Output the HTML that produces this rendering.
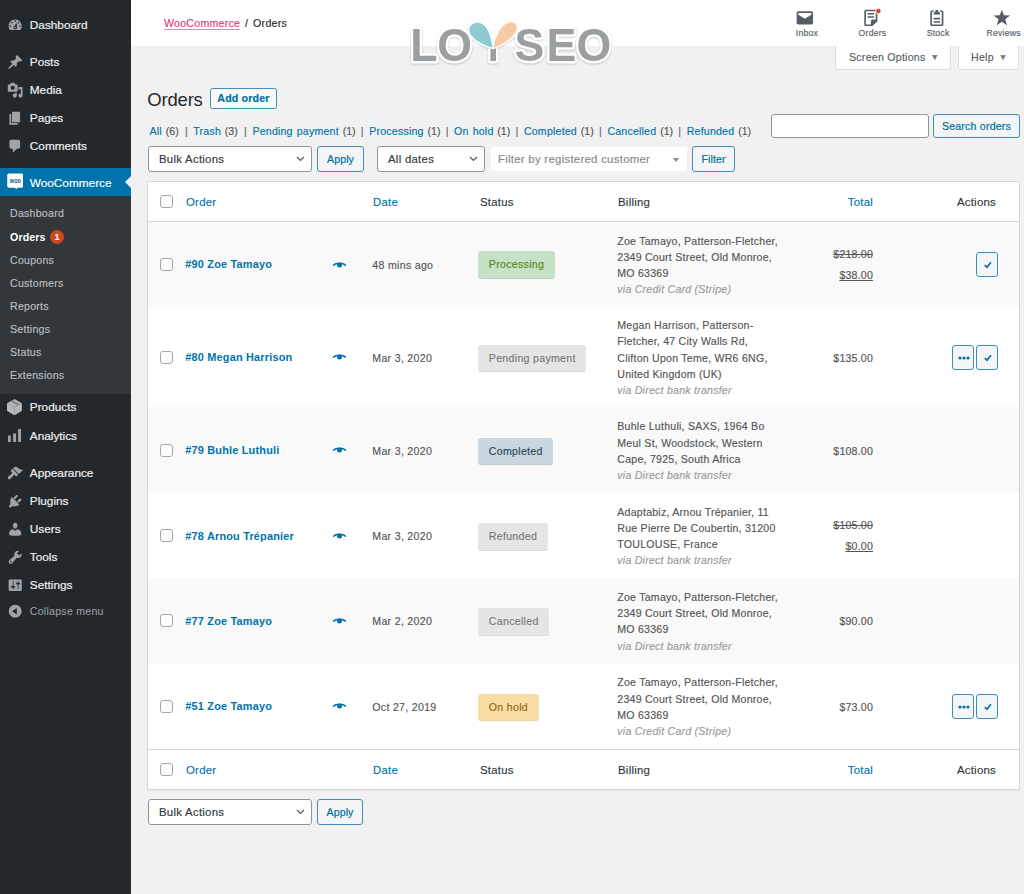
<!DOCTYPE html>
<html lang="en">
<head>
<meta charset="utf-8">
<title>Orders ‹ WooCommerce</title>
<style>
*{box-sizing:border-box;margin:0;padding:0}
html,body{width:1024px;height:894px;overflow:hidden}
body{background:#f1f1f1;font-family:"Liberation Sans",Arial,sans-serif;font-size:10.6px;color:#444;position:relative;-webkit-font-smoothing:antialiased}
a{color:#0073aa;text-decoration:none}
.abs{position:absolute}
/* ---------- sidebar ---------- */
#side{position:absolute;left:0;top:0;width:131px;height:894px;background:#23282d}
#side .mi{position:absolute;left:0;width:131px;height:28px;color:#eee;font-size:11.800px;line-height:28px;padding-left:29.800px;padding-top:.8px;white-space:nowrap;-webkit-text-stroke:.2px #eee}
#side .mi svg{position:absolute;left:6.500px;top:6.600px;width:16.400px;height:16.400px;fill:#9ea3a8}
#side .mi.cur{background:#0073aa;color:#fff}
#side .mi.cur svg{fill:#fff}
#side .mi.cur:after{content:"";position:absolute;right:0;top:8px;border:6px solid transparent;border-right-color:#f1f1f1;border-left:0}
#sub{position:absolute;left:0;top:196px;width:131px;height:197.500px;background:#32373c}
#sub .si{position:absolute;left:10px;font-size:10.6px;color:#bcc1c6;line-height:14px;white-space:nowrap;letter-spacing:.25px;-webkit-text-stroke:.12px #bcc1c6}
#sub .si.on{color:#fff;font-weight:bold;letter-spacing:.15px;-webkit-text-stroke:0}
#sub .badge{position:absolute;left:40px;top:-.3px;width:14.200px;height:14.200px;border-radius:7.100px;background:#ca4a1f;color:#fff;font-size:9.200px;line-height:14.200px;text-align:center;font-weight:bold;letter-spacing:0}
/* ---------- header ---------- */
#hdr{position:absolute;left:131px;top:0;width:893px;height:46px;background:#fff}
#crumb{position:absolute;left:33px;top:16px;font-size:10.6px;line-height:14px;color:#23282d;white-space:nowrap;letter-spacing:.25px;word-spacing:1.700px}
#crumb a{color:#d6426c;text-decoration:underline;text-decoration-color:#e58aa4;text-underline-offset:2px}
.api{position:absolute;top:7.500px;width:19.700px;height:19.700px;fill:#555d66;overflow:visible}
.apl{position:absolute;top:26.800px;width:60px;text-align:center;font-size:8.600px;letter-spacing:.25px;line-height:12px;color:#555d66;white-space:nowrap}
.tab{position:absolute;top:46px;height:23.500px;letter-spacing:.25px;background:#fff;border:1px solid #ddd;border-top:0;border-radius:0 0 3px 3px;font-size:10.6px;line-height:22px;color:#555d66;white-space:nowrap;box-shadow:0 0 0 transparent}
.tab i{font-style:normal;font-size:8.500px;margin-left:5px;position:relative;top:-1px;color:#72777c}

/* ---------- main ---------- */
h1{position:absolute;left:147.300px;top:86.500px;letter-spacing:-.2px;font-size:18.500px;font-weight:normal;color:#23282d;line-height:26px}
.btn{position:absolute;border:1px solid #418db4;-webkit-text-stroke:.2px #0071a1;letter-spacing:.1px;border-radius:3px;background:#f3f5f6;color:#0071a1;font-size:10.6px;text-align:center;white-space:nowrap}
#sss{position:absolute;left:149.500px;top:124px;font-size:10.6px;line-height:14px;color:#555;white-space:nowrap;word-spacing:.9px}
#sss a{letter-spacing:.2px}
#sss b{font-weight:normal;color:#666;margin:0 1.8px 0 2.4px}
#sss b.n{margin-left:1.4px}
.inp{position:absolute;background:#fff;border:1px solid #8f9398;border-radius:3px}
.sel{position:absolute;background:#fff;border:1px solid #8f9398;border-radius:3px;font-size:11.4px;letter-spacing:.27px;color:#32373c;padding-left:10px;white-space:nowrap}
.sel svg{position:absolute;right:6px;top:50%;margin-top:-3px;width:9px;height:6px;fill:none;stroke:#555;stroke-width:1.15}
#tbl{position:absolute;left:147px;top:181px;width:873px;height:608.500px;background:#fff;border:1px solid #d3d6d9;box-shadow:0 1px 1px rgba(0,0,0,.04)}
.row{position:absolute;left:0;width:871px}
.row.alt{background:#f9f9f9}
.cb{position:absolute;left:12px;width:13px;height:13px;border:1px solid #a3a6aa;border-radius:3px;background:#fdfdfd}
.th{position:absolute;letter-spacing:.25px;font-size:11.4px;line-height:14px;color:#32373c;white-space:nowrap}
.th.l{color:#0073aa}
.ord{position:absolute;left:37.300px;font-size:10.900px;font-weight:bold;letter-spacing:.2px;color:#0073aa;line-height:14px;white-space:nowrap}
.eye{position:absolute;left:185px;width:13px;height:6px}
.date{position:absolute;left:224.300px;letter-spacing:.3px;font-size:10.6px;line-height:14px;color:#555;white-space:nowrap}
.st{position:absolute;left:329.800px;height:27.500px;border-radius:3px;font-size:10.6px;letter-spacing:.3px;line-height:26px;padding:0 10.700px 0 11px;white-space:nowrap;border-bottom:1px solid rgba(0,0,0,.05)}
.st.pr{background:#c6e1c6;color:#5b841b}
.st.gr{background:#e5e5e5;color:#777}
.st.co{background:#c8d7e1;color:#2e4453}
.st.oh{background:#f8dda7;color:#94660c}
.bill,.date,.tot,.th,#sss,.sel,#crumb,.apl,.tab,.st{-webkit-text-stroke:.15px currentColor}
.bill{position:absolute;left:469.300px;font-size:10.6px;letter-spacing:.23px;line-height:16.2px;color:#555;white-space:nowrap}
.bill i{color:#999;display:block}
.tot{position:absolute;right:146px;letter-spacing:.2px;font-size:10.6px;line-height:14px;color:#555;text-align:right;white-space:nowrap}
.tot del{display:block;margin-bottom:7px}
.tot ins{display:block;text-decoration:underline}
.act{position:absolute;width:22px;height:25px;border:1px solid #3a8fba;border-radius:3px;background:#f3f5f6}
.act svg{position:absolute;fill:#0071a1}
</style>
</head>
<body>
<div id="side">
  <div class="mi" style="top:10px"><svg viewBox="0 0 20 20"><path d="M3.760 16h12.480c1.100-1.370 1.760-3.110 1.760-5 0-4.420-3.580-8-8-8s-8 3.580-8 8c0 1.890.660 3.630 1.760 5zM10 4c.550 0 1 .450 1 1s-.450 1-1 1-1-.450-1-1 .450-1 1-1zM6 6c.550 0 1 .450 1 1s-.450 1-1 1-1-.450-1-1 .450-1 1-1zm8 0c.550 0 1 .450 1 1s-.450 1-1 1-1-.450-1-1 .450-1 1-1zm-5.370 5.550L12 7v6c0 1.100-.9 2-2 2s-2-.9-2-2c0-.570.240-1.080.630-1.450zM4 10c.550 0 1 .450 1 1s-.450 1-1 1-1-.450-1-1 .450-1 1-1zm12 0c.550 0 1 .450 1 1s-.450 1-1 1-1-.450-1-1 .450-1 1-1zm-5 3c0-.550-.450-1-1-1s-1 .450-1 1 .450 1 1 1 1-.450 1-1z"/></svg>Dashboard</div>
  <div class="mi" style="top:47px"><svg viewBox="0 0 20 20"><path d="M10.440 3.020l1.820-1.820 6.360 6.350-1.830 1.820c-1.050-.680-2.480-.570-3.410.360l-.750.750c-.920.930-1.040 2.350-.350 3.410l-1.830 1.820-2.410-2.410-2.800 2.790c-.420.420-3.380 2.710-3.800 2.290s1.860-3.390 2.280-3.810l2.790-2.790L4.100 9.360l1.830-1.820c1.050.690 2.480.570 3.400-.360l.750-.750c.930-.920 1.050-2.350.360-3.410z"/></svg>Posts</div>
  <div class="mi" style="top:75px"><svg viewBox="0 0 20 20"><path d="M13 11V4c0-.550-.450-1-1-1h-1.670L9 1H5L3.670 3H2c-.550 0-1 .450-1 1v7c0 .550.450 1 1 1h10c.550 0 1-.450 1-1zM7 4.500c1.380 0 2.500 1.120 2.500 2.500S8.380 9.500 7 9.500 4.500 8.380 4.500 7 5.620 4.500 7 4.500zM14 6h5v10.500c0 1.380-1.120 2.500-2.500 2.500S14 17.880 14 16.500s1.120-2.500 2.500-2.500c.170 0 .340.020.5.050V9h-3V6zm-4 8.050V13h2v3.500c0 1.380-1.120 2.500-2.500 2.500S7 17.880 7 16.500 8.120 14 9.500 14c.170 0 .340.020.5.050z"/></svg>Media</div>
  <div class="mi" style="top:103px"><svg viewBox="0 0 20 20"><path d="M6 15V2h10v13H6zm-1 1h8v2H3V5h2v11z"/></svg>Pages</div>
  <div class="mi" style="top:131px"><svg viewBox="0 0 20 20"><path d="M5 2h9c1.100 0 2 .9 2 2v7c0 1.100-.9 2-2 2h-2l-5 5v-5H5c-1.100 0-2-.9-2-2V4c0-1.100.9-2 2-2z"/></svg>Comments</div>
  <div class="mi cur" style="top:168px"><svg viewBox="0 0 20 20" style="top:5.400px"><path d="M2.300 .5h15.400c1.100 0 2 .9 2 2v13.400c0 1.100-.9 2-2 2h-4.900l-1.500 1.900-1.500-1.900H2.300c-1.100 0-2-.9-2-2V2.500c0-1.100.9-2 2-2z"/><text x="3.500" y="11.800" textLength="13.400" lengthAdjust="spacingAndGlyphs" font-family="Liberation Sans,sans-serif" font-weight="bold" font-size="8.800" fill="#0b5c88" stroke="none">woo</text></svg>WooCommerce</div>
  <div id="sub">
    <div class="si" style="top:10px">Dashboard</div>
    <div class="si on" style="top:34px">Orders<span class="badge">1</span></div>
    <div class="si" style="top:57px">Coupons</div>
    <div class="si" style="top:80px">Customers</div>
    <div class="si" style="top:103px">Reports</div>
    <div class="si" style="top:126px">Settings</div>
    <div class="si" style="top:149px">Status</div>
    <div class="si" style="top:172px">Extensions</div>
  </div>
  <div class="mi" style="top:392.300px"><svg viewBox="0 0 15.2 16.6" style="left:7.300px;top:6.500px;width:14.900px;height:16.400px"><path d="M7.600 0L15.200 4.350V11.900L7.600 16.600 0 11.900V4.350z" fill="#b4b9be"/><path d="M0 4.350L7.600 8.500 15.200 4.350M7.600 8.500V16.600" fill="none" stroke="#8f9499" stroke-width=".7"/><path d="M3.300 1.900L11 6.200M4.700 1.100L12.400 5.400" fill="none" stroke="#50565c" stroke-width=".7"/></svg>Products</div>
  <div class="mi" style="top:421.200px"><svg viewBox="0 0 13.2 13.1" style="left:8px;top:7.400px;width:13.200px;height:13.100px"><path d="M0 6.400h2.800v6.700H0zM5.100 4.400h3v8.700h-3zM10.100 0h3v13.100h-3z"/></svg>Analytics</div>
  <div class="mi" style="top:458px"><svg viewBox="0 0 20 20"><path d="M14.480 11.060L7.410 3.990l1.500-1.500c.5-.560 2.300-.470 3.510.320 1.210.8 1.430 1.280 2.910 2.100 1.180.640 2.450 1.260 4.450.850zm-.710.710L6.700 4.700 4.930 6.470c-.390.390-.390 1.020 0 1.410l1.060 1.060c.390.390.390 1.030 0 1.420-.6.6-1.430 1.110-2.210 1.690-.350.260-.7.530-1.010.840C1.430 14.230.4 16.080 1.400 17.070c.990 1 2.840-.030 4.180-1.360.310-.310.580-.660.850-1.020.570-.780 1.080-1.610 1.690-2.210.390-.390 1.020-.390 1.410 0l1.060 1.060c.390.390 1.020.390 1.410 0z"/></svg>Appearance</div>
  <div class="mi" style="top:486px"><svg viewBox="0 0 20 20"><path d="M13.110 4.360L9.870 7.600 8 5.730l3.240-3.240c.350-.340 1.050-.2 1.560.320.520.510.660 1.210.310 1.550zm-8 1.770l.910-1.120 9.010 9.010-1.190.840c-.710.710-2.630 1.160-3.820 1.160H6.140L4.900 17.260c-.590.590-1.540.590-2.120 0-.590-.580-.590-1.530 0-2.120l1.240-1.240v-3.880c0-1.130.4-3.190 1.090-3.890zm7.260 3.970l3.240-3.240c.340-.350 1.040-.210 1.550.310.520.510.660 1.210.310 1.550l-3.240 3.250z"/></svg>Plugins</div>
  <div class="mi" style="top:514px"><svg viewBox="0 0 20 20"><path d="M10 9.250c-2.270 0-2.730-3.440-2.730-3.440C7 4.020 7.820 2 9.970 2c2.160 0 2.980 2.020 2.710 3.810 0 0-.410 3.440-2.680 3.440zm0 2.570L12.720 10c2.390 0 4.520 2.330 4.520 4.530v2.490s-3.650 1.130-7.240 1.130c-3.650 0-7.240-1.130-7.240-1.130v-2.490c0-2.250 1.940-4.480 4.470-4.480z"/></svg>Users</div>
  <div class="mi" style="top:542px"><svg viewBox="0 0 20 20"><path d="M16.680 9.770c-1.340 1.340-3.300 1.670-4.950.990l-5.410 6.520c-.990.990-2.590.990-3.580 0s-.990-2.590 0-3.570l6.520-5.420c-.680-1.650-.350-3.610.990-4.950 1.280-1.280 3.120-1.620 4.720-1.060l-2.890 2.890 2.820 2.820 2.860-2.870c.530 1.580.180 3.390-1.080 4.650zM3.810 16.210c.4.390 1.040.390 1.430 0 .4-.4.400-1.040 0-1.430-.390-.4-1.030-.4-1.430 0-.390.390-.390 1.030 0 1.430z"/></svg>Tools</div>
  <div class="mi" style="top:570.500px"><svg viewBox="0 0 20 20"><path d="M18 16V4c0-.550-.450-1-1-1H3c-.550 0-1 .450-1 1v12c0 .550.450 1 1 1h14c.550 0 1-.450 1-1zM8 11h1c.550 0 1 .450 1 1s-.450 1-1 1H8v1.500c0 .280-.220.5-.5.5s-.5-.220-.5-.5V13H6c-.550 0-1-.450-1-1s.450-1 1-1h1V5.500c0-.280.220-.5.5-.5s.5.220.5.5V11zm5-2h-1c-.550 0-1-.450-1-1s.450-1 1-1h1V5.500c0-.280.220-.5.5-.5s.5.220.5.5V7h1c.550 0 1 .450 1 1s-.450 1-1 1h-1v5.500c0 .280-.220.5-.5.5s-.5-.220-.5-.5V9z"/></svg>Settings</div>
  <div class="mi" style="top:596.600px;color:#a0a5aa;font-size:10.6px;letter-spacing:.25px;-webkit-text-stroke:0"><svg viewBox="0 0 20 20"><path d="M10 2.160c4.330 0 7.840 3.510 7.840 7.840s-3.510 7.840-7.840 7.840S2.160 14.330 2.160 10 5.670 2.160 10 2.160zm2 11.720V6.120L6.180 9.970z"/></svg>Collapse menu</div>
</div>

<div id="hdr">
  <div id="crumb"><a>WooCommerce</a> / Orders</div>
  <svg class="api" style="left:664.4px" viewBox="0 0 24 24"><path d="M20 4H4c-1.105 0-2 .895-2 2v12c0 1.105.895 2 2 2h16c1.105 0 2-.895 2-2V6c0-1.105-.895-2-2-2zm0 4.236l-8 4.882-8-4.882V6h16v2.236z"/></svg><div class="apl" style="left:646.0px">Inbox</div>
  <svg class="api" style="left:729.8px" viewBox="0 0 24 24"><path d="M16 8H8V6h8v2zm0 2H8v2h8v-2zm4-6v12l-6 6H6c-1.105 0-2-.895-2-2V4c0-1.105.895-2 2-2h12c1.105 0 2 .895 2 2zm-2 10V4H6v16h6v-4c0-1.105.895-2 2-2h4z"/><circle cx="21.200" cy="3.700" r="3.300" fill="#d1492a" stroke="#fff" stroke-width="1"/></svg><div class="apl" style="left:711.5px">Orders</div>
  <svg class="api" style="left:795.7px" viewBox="0 0 24 24"><path d="M16 18H8v-2h8v2zm0-6H8v2h8v-2zm2-9h-2v2h2v15H6V5h2V3H6c-1.105 0-2 .895-2 2v15c0 1.105.895 2 2 2h12c1.105 0 2-.895 2-2V5c0-1.105-.895-2-2-2zm-4 2V4c0-1.105-.895-2-2-2s-2 .895-2 2v1c-1.105 0-2 .895-2 2v1h8V7c0-1.105-.895-2-2-2z"/></svg><div class="apl" style="left:777.1px">Stock</div>
  <svg class="api" style="left:860.9px" viewBox="0 0 24 24"><path d="M12 2l2.582 6.953L22 9.257l-5.822 4.602L18.180 21 12 16.891 5.820 21l2.002-7.141L2 9.257l7.418-.304z"/></svg><div class="apl" style="left:842.6px">Reviews</div>
</div>
<div class="tab" style="left:835px;width:116px;padding-left:13px">Screen Options<i>▼</i></div>
<div class="tab" style="left:958px;width:61px;padding-left:12px">Help<i>▼</i></div>


<h1>Orders</h1>
<div class="btn" style="left:210.300px;top:88.400px;width:66.400px;height:21px;line-height:19.600px;font-weight:bold;background:#f7f9fa;border-radius:2.500px;letter-spacing:.2px">Add order</div>
<div id="sss"><a>All</a> (6) <b>|</b> <a>Trash</a> (3) <b>|</b> <a>Pending payment</a> (1) <b class="n">|</b> <a>Processing</a> (1) <b class="n">|</b> <a>On hold</a> (1) <b class="n">|</b> <a>Completed</a> (1) <b class="n">|</b> <a>Cancelled</a> (1) <b class="n">|</b> <a>Refunded</a> (1)</div>
<div class="inp" style="left:771px;top:114.200px;width:158px;height:24.300px"></div>
<div class="btn" style="left:933px;top:114.200px;width:87px;height:24.300px;line-height:22.300px;letter-spacing:.2px">Search orders</div>

<div class="sel" style="left:148px;top:146px;width:164px;height:26px;line-height:25px">Bulk Actions<svg viewBox="0 0 9 6"><path d="M1 1l3.5 3.5L8 1"/></svg></div>
<div class="btn" style="left:317px;top:146px;width:47px;height:26px;line-height:25px">Apply</div>
<div class="sel" style="left:377px;top:146px;width:108px;height:26px;line-height:25px">All dates<svg viewBox="0 0 9 6"><path d="M1 1l3.5 3.5L8 1"/></svg></div>
<div class="sel" style="left:491px;top:147px;width:196px;height:24px;line-height:24px;border:0;color:#888;padding-left:7px;border-radius:3px">Filter by registered customer<span style="position:absolute;right:8px;top:11px;border:3px solid transparent;border-top:4px solid #888;border-bottom:0"></span></div>
<div class="btn" style="left:692px;top:146px;width:43px;height:26px;line-height:25px">Filter</div>

<div id="tbl">
<div class="row" style="top:0;height:40px;border-bottom:1px solid #d3d6d9"><div class="cb" style="top:13px"></div><div class="th l" style="left:38px;top:12.5px">Order</div><div class="th l" style="left:225px;top:12.5px">Date</div><div class="th" style="left:332px;top:12.5px">Status</div><div class="th" style="left:470px;top:12.5px">Billing</div><div class="th l" style="right:146px;top:12.5px">Total</div><div class="th" style="right:23px;top:12.5px">Actions</div></div>
<div class="row alt" style="top:40.0px;height:85.3px"><div class="cb" style="top:36.1px"></div><a class="ord" style="top:35.4px">#90 Zoe Tamayo</a><svg class="eye" style="top:39.8px" viewBox="0 0 13 6"><path d="M0.5 3.300C2.600 0.500 10.400 0.500 12.500 3.300" stroke="#0073aa" stroke-width="1.500" fill="none" stroke-linecap="round"/><circle cx="6.500" cy="3.100" r="2.500" fill="#0073aa"/></svg><div class="date" style="top:36.1px">48 mins ago</div><div class="st pr" style="top:29.1px">Processing</div><div class="bill" style="top:10.7px">Zoe Tamayo, Patterson-Fletcher,<br>2349 Court Street, Old Monroe,<br>MO 63369<i>via Credit Card (Stripe)</i></div><div class="tot" style="top:25.0px"><del>$218.00</del><ins>$38.00</ins></div><div class="act" style="left:827.800px;top:30.1px"><svg style="left:6px;top:7px;width:10px;height:10px" viewBox="0 0 10 10"><path d="M1.800 5.200l2.200 2.100 3.900-5" fill="none" stroke="#0071a1" stroke-width="1.700"/></svg></div></div>
<div class="row" style="top:125.3px;height:100.0px"><div class="cb" style="top:43.5px"></div><a class="ord" style="top:42.8px">#80 Megan Harrison</a><svg class="eye" style="top:47.1px" viewBox="0 0 13 6"><path d="M0.5 3.300C2.600 0.500 10.400 0.500 12.500 3.300" stroke="#0073aa" stroke-width="1.500" fill="none" stroke-linecap="round"/><circle cx="6.500" cy="3.100" r="2.500" fill="#0073aa"/></svg><div class="date" style="top:43.5px">Mar 3, 2020</div><div class="st gr" style="top:37.5px">Pending payment</div><div class="bill" style="top:9.9px">Megan Harrison, Patterson-<br>Fletcher, 47 City Walls Rd,<br>Clifton Upon Teme, WR6 6NG,<br>United Kingdom (UK)<i>via Direct bank transfer</i></div><div class="tot" style="top:43.5px">$135.00</div><div class="act" style="left:804px;top:37.5px"><svg style="left:4.500px;top:10px;width:12px;height:4px" viewBox="0 0 12 4"><circle cx="2" cy="2" r="1.600"/><circle cx="6" cy="2" r="1.600"/><circle cx="10" cy="2" r="1.600"/></svg></div><div class="act" style="left:827.800px;top:37.5px"><svg style="left:6px;top:7px;width:10px;height:10px" viewBox="0 0 10 10"><path d="M1.800 5.200l2.200 2.100 3.900-5" fill="none" stroke="#0071a1" stroke-width="1.700"/></svg></div></div>
<div class="row alt" style="top:225.3px;height:85.9px"><div class="cb" style="top:36.5px"></div><a class="ord" style="top:35.8px">#79 Buhle Luthuli</a><svg class="eye" style="top:40.1px" viewBox="0 0 13 6"><path d="M0.5 3.300C2.600 0.500 10.400 0.500 12.500 3.300" stroke="#0073aa" stroke-width="1.500" fill="none" stroke-linecap="round"/><circle cx="6.500" cy="3.100" r="2.500" fill="#0073aa"/></svg><div class="date" style="top:36.5px">Mar 3, 2020</div><div class="st co" style="top:30.5px">Completed</div><div class="bill" style="top:11.0px">Buhle Luthuli, SAXS, 1964 Bo<br>Meul St, Woodstock, Western<br>Cape, 7925, South Africa<i>via Direct bank transfer</i></div><div class="tot" style="top:36.5px">$108.00</div></div>
<div class="row" style="top:311.2px;height:85.2px"><div class="cb" style="top:36.1px"></div><a class="ord" style="top:35.4px">#78 Arnou Trépanier</a><svg class="eye" style="top:39.7px" viewBox="0 0 13 6"><path d="M0.5 3.300C2.600 0.500 10.400 0.500 12.500 3.300" stroke="#0073aa" stroke-width="1.500" fill="none" stroke-linecap="round"/><circle cx="6.500" cy="3.100" r="2.500" fill="#0073aa"/></svg><div class="date" style="top:36.1px">Mar 3, 2020</div><div class="st gr" style="top:29.9px">Refunded</div><div class="bill" style="top:10.6px">Adaptabiz, Arnou Trépanier, 11<br>Rue Pierre De Coubertin, 31200<br>TOULOUSE, France<i>via Direct bank transfer</i></div><div class="tot" style="top:25.0px"><del>$105.00</del><ins>$0.00</ins></div></div>
<div class="row alt" style="top:396.4px;height:85.2px"><div class="cb" style="top:36.1px"></div><a class="ord" style="top:35.4px">#77 Zoe Tamayo</a><svg class="eye" style="top:39.7px" viewBox="0 0 13 6"><path d="M0.5 3.300C2.600 0.500 10.400 0.500 12.500 3.300" stroke="#0073aa" stroke-width="1.500" fill="none" stroke-linecap="round"/><circle cx="6.500" cy="3.100" r="2.500" fill="#0073aa"/></svg><div class="date" style="top:36.1px">Mar 2, 2020</div><div class="st gr" style="top:30.0px">Cancelled</div><div class="bill" style="top:10.6px">Zoe Tamayo, Patterson-Fletcher,<br>2349 Court Street, Old Monroe,<br>MO 63369<i>via Direct bank transfer</i></div><div class="tot" style="top:36.1px">$90.00</div></div>
<div class="row" style="top:481.6px;height:85.5px"><div class="cb" style="top:36.2px"></div><a class="ord" style="top:35.5px">#51 Zoe Tamayo</a><svg class="eye" style="top:39.9px" viewBox="0 0 13 6"><path d="M0.5 3.300C2.600 0.500 10.400 0.500 12.500 3.300" stroke="#0073aa" stroke-width="1.500" fill="none" stroke-linecap="round"/><circle cx="6.500" cy="3.100" r="2.500" fill="#0073aa"/></svg><div class="date" style="top:36.2px">Oct 27, 2019</div><div class="st oh" style="top:30.2px">On hold</div><div class="bill" style="top:10.8px">Zoe Tamayo, Patterson-Fletcher,<br>2349 Court Street, Old Monroe,<br>MO 63369<i>via Credit Card (Stripe)</i></div><div class="tot" style="top:36.2px">$73.00</div><div class="act" style="left:804px;top:30.2px"><svg style="left:4.500px;top:10px;width:12px;height:4px" viewBox="0 0 12 4"><circle cx="2" cy="2" r="1.600"/><circle cx="6" cy="2" r="1.600"/><circle cx="10" cy="2" r="1.600"/></svg></div><div class="act" style="left:827.800px;top:30.2px"><svg style="left:6px;top:7px;width:10px;height:10px" viewBox="0 0 10 10"><path d="M1.800 5.200l2.200 2.100 3.900-5" fill="none" stroke="#0071a1" stroke-width="1.700"/></svg></div></div>
<div class="row" style="top:567.100px;height:40px;border-top:1px solid #d3d6d9"><div class="cb" style="top:13px"></div><div class="th l" style="left:38px;top:12.5px">Order</div><div class="th l" style="left:225px;top:12.5px">Date</div><div class="th" style="left:332px;top:12.5px">Status</div><div class="th" style="left:470px;top:12.5px">Billing</div><div class="th l" style="right:146px;top:12.5px">Total</div><div class="th" style="right:23px;top:12.5px">Actions</div></div>
</div>

<div class="sel" style="left:148px;top:799px;width:164px;height:26px;line-height:24px">Bulk Actions<svg viewBox="0 0 9 6"><path d="M1 1l3.5 3.5L8 1"/></svg></div>
<div class="btn" style="left:317px;top:799px;width:46px;height:26px;line-height:24px">Apply</div>

<svg id="logo" style="position:absolute;left:400px;top:10px;width:230px;height:65px;overflow:visible" viewBox="0 0 230 65">
<defs>
<filter id="ls" x="-10%" y="-20%" width="120%" height="150%"><feGaussianBlur in="SourceAlpha" stdDeviation="1.300"/><feOffset dy="1"/><feComponentTransfer><feFuncA type="linear" slope=".22"/></feComponentTransfer><feMerge><feMergeNode/><feMergeNode in="SourceGraphic"/></feMerge></filter>
<clipPath id="lclip"><rect x="-10" y="-10" width="86" height="90"/><rect x="112" y="-10" width="130" height="90"/><rect x="90.400" y="35.600" width="5.600" height="20"/></clipPath>
<pattern id="dots" width="2" height="2" patternUnits="userSpaceOnUse"><rect width="2" height="2" fill="#f7cda9"/><circle cx="1" cy="1" r=".45" fill="#efb98e"/></pattern>
</defs>
<g filter="url(#ls)">
<g font-family="Liberation Sans,Arial,sans-serif" font-weight="bold" font-size="44.700" fill="#9c9fa2" stroke="#fff" stroke-width="4.400" stroke-linejoin="round" paint-order="stroke" transform="scale(1,1.045)">
<rect x="88.300" y="36.500" width="9.800" height="14.300" rx="1.500" fill="#fff" stroke="none"/>
<text x="10.300 37.200 78.300 114.400 146.400 176.400" y="48.600" clip-path="url(#lclip)">LOYSEO</text>
</g>
<path d="M92.500 37.800C88 36 76 33 70.500 24 67 17.500 72 12.500 78 12.700c6 .3 10 6.300 11.500 12.300 1.500 5 2.500 9 3 12.800z" fill="#8dcbd2" stroke="#fff" stroke-width="2.600" stroke-linejoin="round" paint-order="stroke"/>
<path d="M93.700 37.800c.8-4.800 2.300-9.800 4.100-13.700 2.200-5.100 6.200-11.100 13-11.600 5.200-.3 7.200 4 5.200 8.500-2.500 6-10 12-22.300 16.800z" fill="url(#dots)" stroke="#fff" stroke-width="2.600" stroke-linejoin="round" paint-order="stroke"/>
</g>
</svg>
</body>
</html>
